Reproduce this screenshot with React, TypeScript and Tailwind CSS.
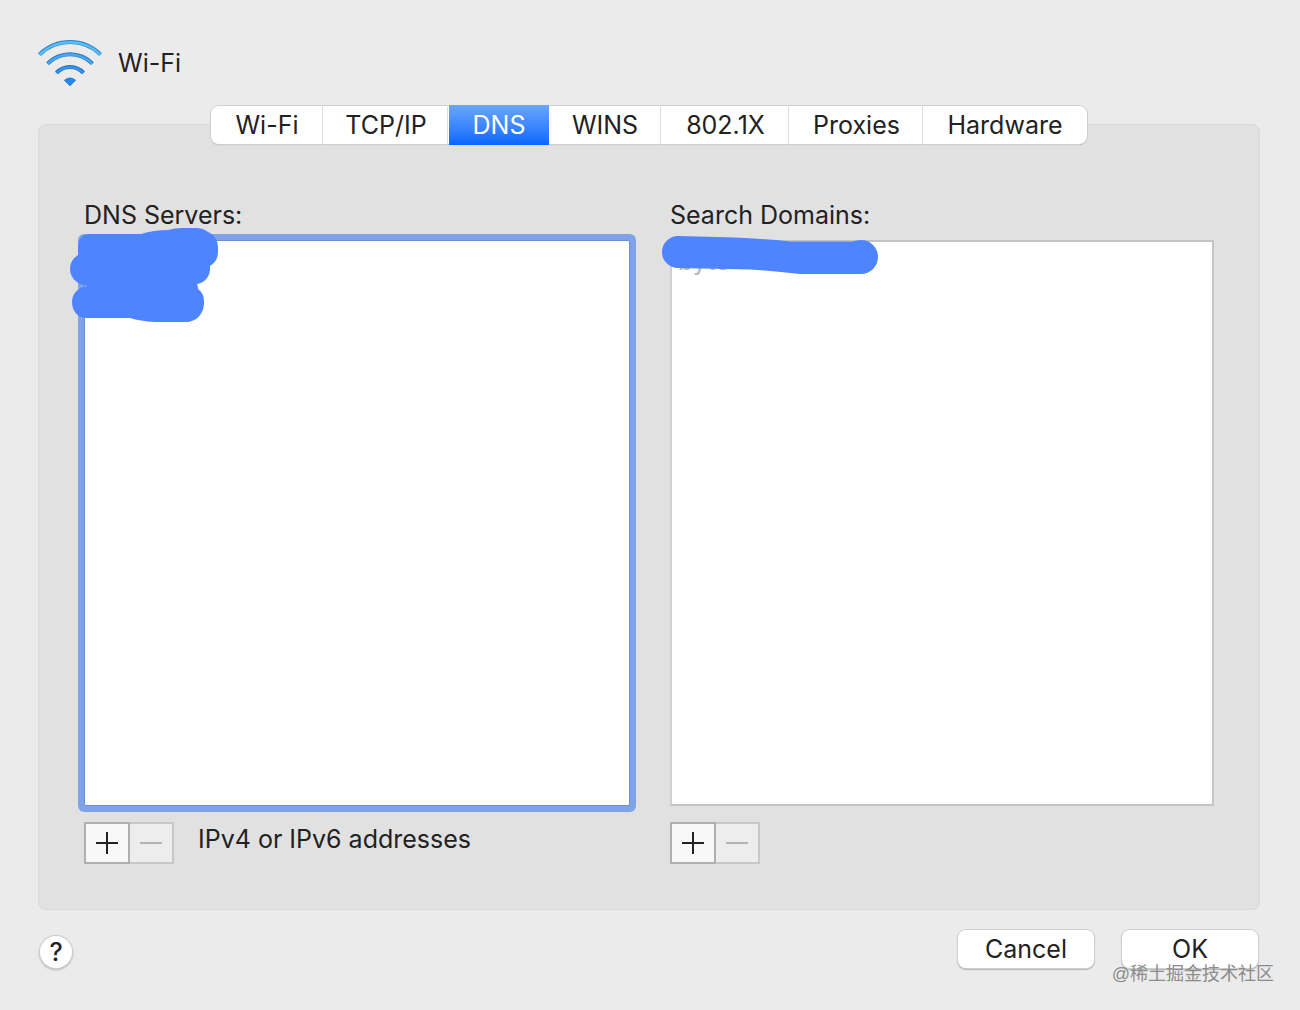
import { useState } from "react";
import type { ReactNode } from "react";

const tabs = [
  { label: "Wi-Fi", size: "w-[113px]" },
  { label: "TCP/IP", size: "w-[125px]" },
  { label: "DNS", size: "w-[100px]" },
  { label: "WINS", size: "w-[113px]" },
  { label: "802.1X", size: "w-[128px]" },
  { label: "Proxies", size: "w-[134px]" },
  { label: "Hardware", size: "w-[163px]" },
];

function WifiIcon() {
  const arcs = [
    { d: "M1.400 16.600A43.500 43.500 0 0 1 62.600 16.600", edge: "#2f86c8", fill: "#5bbdf8" },
    { d: "M9.600 25.700A31.300 31.300 0 0 1 54.400 25.700", edge: "#2378c6", fill: "#46a8f4" },
    { d: "M18.500 34.800A18.400 18.400 0 0 1 45.500 34.800", edge: "#1a69c2", fill: "#3495f0" },
  ];
  return (
    <svg viewBox="0 0 64 50" className="h-[50px] w-16" fill="none" aria-hidden="true">
      {arcs.map((a) => (
        <g key={a.d}>
          <path d={a.d} stroke={a.edge} strokeWidth="4" />
          <path d={a.d} stroke={a.fill} strokeWidth="2.4" transform="translate(0 0.3)" />
        </g>
      ))}
      <path d="M26.400 42.300Q32 37.600 37.600 42.300L32 47.800Z" fill="#2588f2" stroke="#1a6fd6" strokeWidth="0.8" />
    </svg>
  );
}

function AddRemove({ name }: { name: string }) {
  return (
    <div className="flex h-[42px]">
      <button
        type="button"
        aria-label={`Add ${name}`}
        className="flex w-[46px] items-center justify-center border-2 border-[#b0b0b0] bg-[#f8f8f8]"
      >
        <svg viewBox="0 0 22 22" className="size-[22px]" stroke="#222" strokeWidth="2" aria-hidden="true">
          <path d="M0 11H22M11 0V22" />
        </svg>
      </button>
      <button
        type="button"
        disabled
        aria-label={`Remove ${name}`}
        className="flex w-11 items-center justify-center border-2 border-l-0 border-[#c8c8c8] bg-[#ededed]"
      >
        <svg viewBox="0 0 22 22" className="size-[22px]" stroke="#b4b4b4" strokeWidth="2" aria-hidden="true">
          <path d="M0 11H22" />
        </svg>
      </button>
    </div>
  );
}

function Column({ id, title, children, footer, name }: { id: string; title: string; name: string; children: ReactNode; footer?: string }) {
  return (
    <section className="flex min-w-0 flex-col" aria-labelledby={id}>
      <h2 id={id} className="mb-1.5 leading-[38px]">{title}</h2>
      <div className="relative flex flex-1">{children}</div>
      <div className="mt-4 flex gap-6">
        <AddRemove name={name} />
        {footer && <p className="leading-[34px]">{footer}</p>}
      </div>
    </section>
  );
}

export default function App() {
  const [active, setActive] = useState("DNS");
  return (
    <main className="relative flex min-h-screen flex-col bg-[#ebebeb] pt-[38px] pr-10 pb-[41px] pl-[38px] font-['Inter','Liberation_Sans',sans-serif] text-[25px] text-[#222]">
      <header className="flex h-[68px] items-start gap-4">
        <WifiIcon />
        <h1 className="leading-[50px]">Wi-Fi</h1>
      </header>

      <div
        role="tablist"
        aria-label="Network settings"
        className="relative z-10 -mb-5 flex h-[38px] self-center rounded-lg bg-white shadow-[0_0_0_1px_#cfcfcf,0_1px_1px_0_#a0a0a0]"
      >
        {tabs.map(({ label, size }) => (
          <button
            key={label}
            type="button"
            role="tab"
            aria-selected={active === label}
            onClick={() => setActive(label)}
            className={`${size} -my-px border-r border-transparent bg-clip-padding leading-9 shadow-[inset_-1px_0_0_#dcdcdc] last:shadow-none aria-selected:border-r-0 aria-selected:bg-linear-to-b aria-selected:from-[#6aa6fb] aria-selected:to-[#0566ff] aria-selected:text-white aria-selected:shadow-none`}
          >
            {label}
          </button>
        ))}
      </div>

      <div
        role="tabpanel"
        className="grid flex-1 grid-cols-[546fr_544fr] gap-10 rounded-lg border border-[#d9d9d9] bg-[#e1e1e1] px-[45px] pt-[71px] pb-[45px]"
      >
        <Column id="dns" title="DNS Servers:" name="DNS server" footer="IPv4 or IPv6 addresses">
          <ul
            role="listbox"
            tabIndex={0}
            aria-labelledby="dns"
            className="flex-1 rounded-xs border border-[#6b8fd0] bg-white shadow-[0_0_0_6px_#7ea3e9] outline-none"
          />
          <svg
            viewBox="70 228 148 94"
            className="absolute -top-3 -left-[14px] h-[94px] w-[148px]"
            fill="#4e84fd"
            aria-hidden="true"
          >
            <path d="M78 248C78 238 83 234 91 234H141Q154 230 168 230Q175 228 182 228H196Q203 228 208 232C215 235 218 241 218 248V252Q218 261 210 266V270C209 279 203 283 197 284Q198 286 198 289Q204 293 204 301V303C204 314 196 322 186 322H155Q140 321 130 318H86C77 318 72 310 72 302C72 294 78 287 87 286C77 285 70 277 70 269Q70 260 78 255Z" />
          </svg>
        </Column>

        <Column id="domains" title="Search Domains:" name="search domain">
          <ul
            role="listbox"
            tabIndex={0}
            aria-labelledby="domains"
            className="flex-1 border-2 border-[#c4c4c4] border-l-[#d0d0d0] bg-white pl-1.5 text-[#b5b5b5] outline-none"
          >
            <li role="option" aria-selected={false} className="leading-[38px]">byte</li>
          </ul>
          <svg
            viewBox="662 236 216 38"
            className="absolute -top-1 -left-2 h-[38px] w-[216px]"
            fill="#4e84fd"
            aria-hidden="true"
          >
            <path d="M678 236L735 237.500Q765 239 790 241.500H852Q857 240 861 240A17 17 0 0 1 861 274H800Q775 271 750 269.500L678 268A16 16 0 0 1 678 236Z" />
          </svg>
        </Column>
      </div>

      <footer className="mt-[19px] flex h-10 items-center">
        <button
          type="button"
          aria-label="Help"
          className="mt-[6px] ml-[2px] size-8 rounded-full bg-white leading-8 font-medium shadow-[0_0_0_1px_#d0d0d0,0_1px_2px_1px_#b5b5b5]"
        >
          ?
        </button>
        <div className="mr-[2px] ml-auto flex gap-7">
          {["Cancel", "OK"].map((label) => (
            <button
              key={label}
              type="button"
              className="h-[38px] w-[136px] rounded-lg bg-white leading-9 shadow-[0_0_0_1px_#cfcfcf,0_1px_1px_1px_#b5b5b5]"
            >
              {label}
            </button>
          ))}
        </div>
      </footer>

      <span className="pointer-events-none absolute right-[26px] bottom-6 font-['Liberation_Sans','Noto_Sans_CJK_SC',sans-serif] text-lg leading-6 text-[#8c8c8c]">
        @稀土掘金技术社区
      </span>
    </main>
  );
}
